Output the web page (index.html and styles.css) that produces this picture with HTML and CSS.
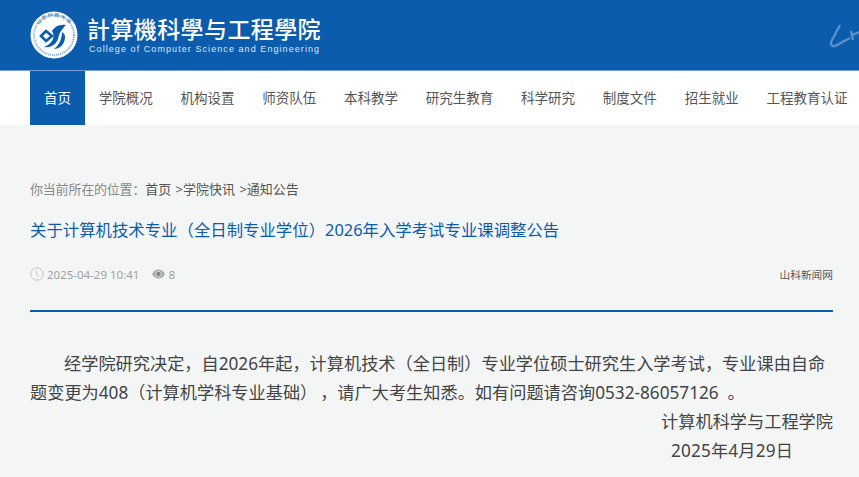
FILE: index.html
```html
<!DOCTYPE html>
<html lang="zh-CN">
<head>
<meta charset="UTF-8">
<meta name="viewport" content="width=device-width, initial-scale=1.0">
<title>关于计算机技术专业（全日制专业学位）2026年入学考试专业课调整公告</title>
<link rel="stylesheet" href="styles.css">
</head>
<body>
<header class="top">
    <div class="logo">
        <svg class="badge" width="48" height="48" viewBox="0 0 48 48">
            <circle cx="24" cy="24" r="23.5" fill="#fff"/>
            <circle cx="24" cy="24" r="20" fill="none" stroke="#7ba6d6" stroke-width="2" stroke-dasharray="1 1"/>
            <path id="badge-arc" d="M6 20A18.500 18.500 0 0 1 42 20" fill="none"/>
            <text class="badge-text"><textPath href="#badge-arc" startOffset="50%" text-anchor="middle">山东科技大学</textPath></text>
            <circle cx="24" cy="24" r="16" fill="#fff"/>
            <path d="M36 14C30 13 25 15 22 20C24 23 24 27 22 30C20 33 17 35 14 36C20 37 26 34 28 28C29 22 32 18 36 14Z" fill="#0b5cad"/>
            <path d="M32 21C32 28 29 34 24 38C30 38 35 33 35 26C35 24 34 22 32 21Z" fill="#0b5cad"/>
            <path d="M11 25L16 20L22 25L16 30Z" fill="none" stroke="#0b5cad" stroke-width="2.600"/>
        </svg>
        <div class="logo-text">
            <div class="logo-cn">計算機科學与工程學院</div>
            <div class="logo-en">College of Computer Science and Engineering</div>
        </div>
    </div>
    <svg class="scribble" width="30" height="24" viewBox="0 0 30 24">
        <path d="M11 1L2 18Q2 23 6 22L21 14" fill="none" stroke="#5c90c9" stroke-width="2.400"/>
        <path d="M22 7L24 16M24 11L30 8" fill="none" stroke="#5c90c9" stroke-width="2.400"/>
    </svg>
</header>

<nav class="nav">
    <a class="nav-item active" href="#">首页</a>
    <a class="nav-item" href="#">学院概况</a>
    <a class="nav-item" href="#">机构设置</a>
    <a class="nav-item" href="#">师资队伍</a>
    <a class="nav-item" href="#">本科教学</a>
    <a class="nav-item" href="#">研究生教育</a>
    <a class="nav-item" href="#">科学研究</a>
    <a class="nav-item" href="#">制度文件</a>
    <a class="nav-item" href="#">招生就业</a>
    <a class="nav-item" href="#">工程教育认证</a>
</nav>

<main class="page">
    <div class="crumbs">
        <span class="crumbs-label">你当前所在的位置：</span>首页 &gt;学院快讯 &gt;通知公告
    </div>
    <h1 class="title">关于计算机技术专业（全日制专业学位）2026年入学考试专业课调整公告</h1>
    <div class="meta">
        <div class="meta-left">
            <svg width="14" height="14" viewBox="0 0 14 14">
                <circle cx="7" cy="7" r="6.200" fill="none" stroke="#c4c4c4" stroke-width="1"/>
                <path d="M6.500 3.500V7.500L9 10" fill="none" stroke="#c4c4c4" stroke-width="1"/>
            </svg>
            <span class="date">2025-04-29 10:41</span>
            <svg class="eye" width="13" height="10" viewBox="0 0 13 10">
                <path d="M0 5C2 1.500 4 0.500 6.500 0.500C9 0.500 11 1.500 13 5C11 8.500 9 9.500 6.500 9.500C4 9.500 2 8.500 0 5Z" fill="#aaa"/>
                <circle cx="6.500" cy="5" r="2.800" fill="#888" stroke="#eee" stroke-width="0.800"/>
            </svg>
            <span>8</span>
        </div>
        <div class="source">山科新闻网</div>
    </div>
    <article class="content">
        <p class="lead">经学院研究决定，自2026年起，计算机技术（全日制）专业学位硕士研究生入学考试，专业课由自命题变更为408（计算机学科专业基础）&thinsp;，请广大考生知悉。如有问题请咨询0532-86057126&nbsp; 。</p>
        <p class="sign">计算机科学与工程学院</p>
        <p class="sign sign-date">2025年4月29日</p>
    </article>
</main>
</body>
</html>
```

FILE: styles.css
```css
body {
    margin: 0;
    height: 477px;
    overflow: hidden;
    font-family: "Noto Sans", "Noto Sans CJK SC", sans-serif;
    background-color: #f4f6f6;
    color: #444;
}

.top {
    height: 70px;
    background-color: #0b5cad;
    display: flex;
    justify-content: space-between;
    align-items: center;
    padding: 0 0 0 30px;
    overflow: hidden;
}

.logo {
    display: flex;
    align-items: center;
    gap: 9px;
}

.badge-text {
    font-family: "Noto Sans CJK SC", sans-serif;
    font-size: 5px;
    letter-spacing: 1px;
    fill: #0b5cad;
}

.logo-cn {
    font-family: "Noto Sans CJK TC", sans-serif;
    font-weight: 500;
    font-size: 23px;
    line-height: 27px;
    letter-spacing: 0.4px;
    color: #fff;
}

.logo-en {
    margin: 1px 0 0 2px;
    font-family: "Liberation Sans", sans-serif;
    font-size: 9px;
    line-height: 12px;
    letter-spacing: 1.07px;
    color: #dbe8f5;
}

.scribble {
    align-self: flex-end;
    margin-bottom: 22px;
}

.nav {
    height: 54px;
    border-top: 1px solid #6f9fd6;
    background-color: #fff;
    display: flex;
    padding-left: 30px;
    white-space: nowrap;
}

.nav-item {
    flex-shrink: 0;
    padding: 0 13.9px;
    font-size: 13.5px;
    line-height: 54px;
    color: #555;
    text-decoration: none;
}

.nav-item.active {
    background-color: #0b5cad;
    color: #fff;
}

.page {
    padding: 0 26px 0 30px;
}

.crumbs {
    margin-top: 54px;
    font-size: 13px;
    line-height: 20px;
    word-spacing: 1px;
    color: #555;
}

.crumbs-label {
    letter-spacing: -0.2px;
    color: #888;
}

.title {
    margin: 20px 0 0;
    font-size: 16.400px;
    font-weight: 400;
    line-height: 22px;
    color: #0b5cad;
}

.meta {
    margin-top: 23px;
    height: 20px;
    display: flex;
    justify-content: space-between;
    align-items: center;
    font-size: 11.500px;
    color: #a0a0a0;
}

.meta-left {
    display: flex;
    align-items: center;
    gap: 3px;
}

.eye {
    margin-left: 10px;
}

.source {
    color: #555;
    font-size: 10.700px;
}

.content {
    margin-top: 26px;
    border-top: 2px solid #0b5cad;
    padding-top: 37px;
    font-size: 17.200px;
    line-height: 29px;
    color: #444;
}

.content p {
    margin: 0;
}

.lead {
    text-indent: 34px;
}

.sign {
    text-align: right;
}

.sign-date {
    padding-right: 40px;
    letter-spacing: 0.15px;
}
```
